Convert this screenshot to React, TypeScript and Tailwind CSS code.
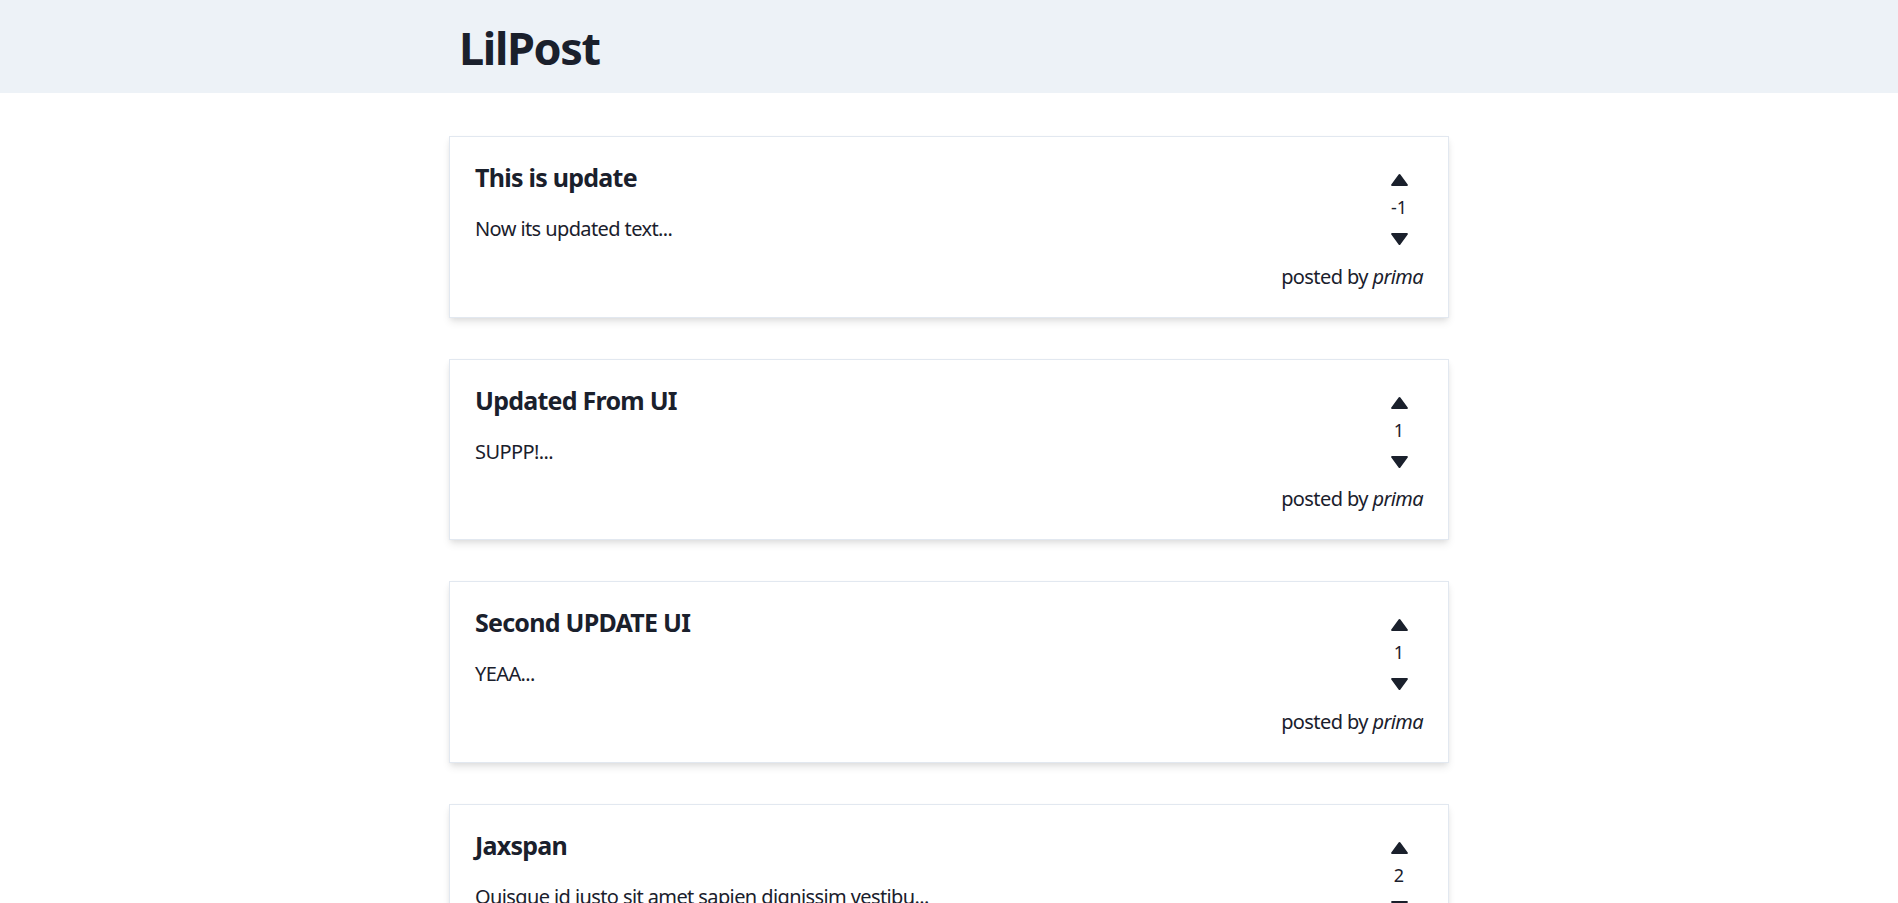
import React from "react";

type Post = {
  id: number;
  title: string;
  text: string;
  votes: number;
  author: string;
};

const posts: Post[] = [
  { id: 1, title: "This is update", text: "Now its updated text...", votes: -1, author: "prima" },
  { id: 2, title: "Updated From UI", text: "SUPPP!...", votes: 1, author: "prima" },
  { id: 3, title: "Second UPDATE UI", text: "YEAA...", votes: 1, author: "prima" },
  {
    id: 4,
    title: "Jaxspan",
    text: "Quisque id justo sit amet sapien dignissim vestibu...",
    votes: 2,
    author: "prima",
  },
  { id: 5, title: "Hello World", text: "First post here...", votes: 0, author: "prima" },
];

function TriangleUp() {
  return (
    <svg width="17" height="12" viewBox="0 0 17 12" className="block">
      <path d="M7.6 0.6a1 1 0 0 1 1.8 0l7.3 10a0.8 0.8 0 0 1-0.7 1.3H1a0.8 0.8 0 0 1-0.7-1.3z" fill="#1a202c" />
    </svg>
  );
}

function TriangleDown() {
  return (
    <svg width="17" height="12" viewBox="0 0 17 12" className="block">
      <path d="M7.6 11.4a1 1 0 0 0 1.8 0l7.3-10a0.8 0.8 0 0 0-0.7-1.3H1a0.8 0.8 0 0 0-0.7 1.3z" fill="#1a202c" />
    </svg>
  );
}

function PostCard({ post }: { post: Post }) {
  return (
    <div className="border border-[#e2e8f0] bg-white p-[25px] shadow-[0_5px_8px_-1px_rgba(0,0,0,0.1),0_2px_5px_-1px_rgba(0,0,0,0.06)]">
      <div className="flex">
        <div className="flex-1">
          <h2 className="text-[25px] font-bold leading-[30px] tracking-[-0.03em] text-[#1a202c]">{post.title}</h2>
          <p className="mt-[22px] text-[20px] leading-[30px] tracking-[-0.03em] text-[#1a202c]">{post.text}</p>
        </div>
        <div className="flex w-[48px] flex-col items-center pb-[16.5px]">
          <div className="h-[32px] cursor-pointer pt-[12px]">
            <TriangleUp />
          </div>
          <span className="h-[26px] text-[18px] leading-[26px] text-[#1a202c]">{post.votes}</span>
          <div className="mt-[13px] cursor-pointer">
            <TriangleDown />
          </div>
        </div>
      </div>
      <p className="text-right text-[20px] leading-[30px] tracking-[-0.03em] text-[#1a202c]">
        posted by <i>{post.author}</i>
      </p>
    </div>
  );
}

export default function App() {
  return (
    <div className="min-h-screen bg-white font-['Noto_Sans',sans-serif]">
      <header className="h-[93px] bg-[#edf2f7] pt-[21px]">
        <div className="mx-auto w-[1000px] pl-[10px]">
          <h1 className="text-[45px] font-bold leading-[54px] tracking-[-0.03em] text-[#1a202c]">LilPost</h1>
        </div>
      </header>
      <main className="mx-auto mt-[43px] flex w-[1000px] flex-col gap-[41px] pb-10">
        {posts.map((p) => (
          <PostCard key={p.id} post={p} />
        ))}
      </main>
    </div>
  );
}
